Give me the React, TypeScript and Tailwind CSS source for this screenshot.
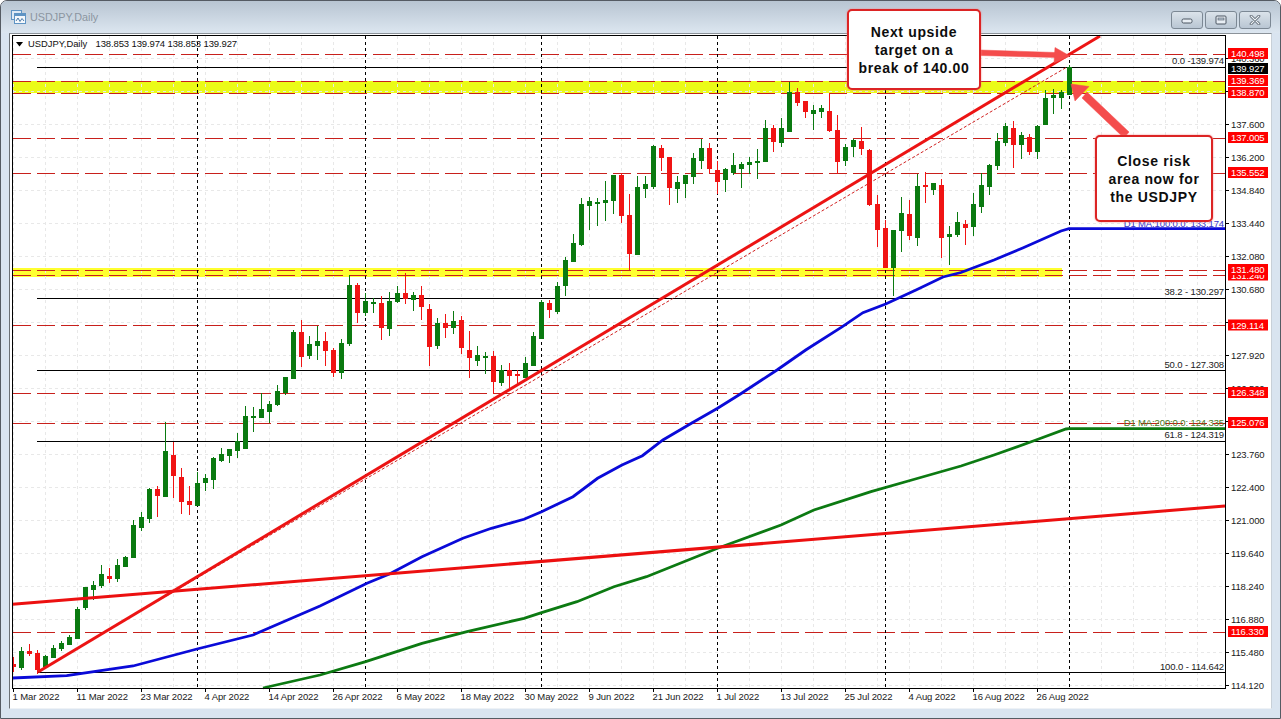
import React from "react";

type C = [string, number, number, number, number];
const candles: C[] = [
  ["r",664,667,657,672],["g",651,668,647,670],["r",651,654,644,656],["r",653,670,650,674],["g",656,667,655,668],
  ["g",648,658,645,658],["g",643,649,641,651],["g",637,645,635,645],["g",609,639,607,639],["g",587,608,587,610],
  ["g",585,590,581,600],["g",574,586,565,588],["r",576,579,568,583],["g",565,579,559,582],["g",557,567,556,567],
  ["g",525,558,520,558],["g",517,528,512,531],["g",489,519,488,523],["r",489,496,486,517],["g",451,497,422,497],
  ["r",455,476,442,498],["r",477,502,468,514],["r",501,505,486,515],["g",483,506,472,506],["g",478,483,474,491],
  ["g",458,480,457,489],["g",454,461,448,462],["g",449,456,449,463],["g",441,451,433,458],["g",416,449,406,449],
  ["g",416,417,407,432],["g",409,418,393,418],["g",404,412,401,423],["g",391,405,385,406],["g",377,393,377,395],
  ["g",332,379,330,379],["r",332,357,320,367],["g",344,356,336,359],["g",341,346,326,360],["r",341,351,332,366],
  ["r",350,373,348,377],["g",343,373,339,379],["g",285,344,275,346],["r",285,313,283,323],["g",301,313,293,316],
  ["g",302,303,298,313],["r",303,328,296,340],["g",301,329,292,336],["g",293,302,286,303],["r",293,299,273,304],
  ["g",295,300,292,311],["r",295,307,286,320],["r",309,347,304,366],["g",323,346,318,349],["r",323,328,314,338],
  ["g",321,328,311,334],["r",320,348,316,354],["r",350,358,331,378],["g",355,361,346,366],["g",356,357,352,374],
  ["r",356,382,351,394],["g",370,383,365,386],["r",370,376,363,390],["r",374,376,370,385],["g",363,378,357,378],
  ["g",336,366,332,366],["g",302,339,300,339],["r",303,310,300,318],["g",286,312,282,314],["g",260,286,257,296],
  ["g",243,262,234,262],["g",204,245,198,246],["g",201,206,197,230],["g",202,204,198,226],["g",200,203,181,221],
  ["g",175,201,175,214],["r",175,216,173,223],["r",215,254,194,270],["g",187,255,176,255],["g",184,189,176,198],
  ["g",146,187,145,189],["r",148,158,145,171],["r",157,188,157,205],["g",182,189,176,203],["g",175,184,175,198],
  ["g",158,177,153,184],["g",148,161,139,169],["r",148,169,143,173],["r",170,182,161,194],["g",169,180,168,192],
  ["g",165,173,153,175],["g",164,169,162,188],["g",162,165,157,174],["g",161,162,149,179],["g",128,162,120,162],
  ["r",128,142,125,152],["g",128,143,118,147],["g",92,132,82,132],["r",92,103,88,106],["r",101,112,101,118],
  ["g",110,114,105,130],["g",108,112,105,118],["r",111,131,93,132],["r",130,162,115,174],["g",147,161,144,166],
  ["g",140,147,139,157],["r",141,149,127,155],["r",150,205,149,206],["r",204,230,195,247],["r",228,268,220,268],
  ["g",230,268,230,296],["g",213,231,197,252],["r",214,236,200,240],["g",186,238,174,246],["r",185,186,172,203],
  ["g",183,190,183,195],["r",185,238,179,258],["g",234,237,226,265],["g",222,235,212,237],["r",224,228,220,245],
  ["g",204,227,193,236],["g",185,207,173,213],["g",165,187,164,195],["g",141,166,133,170],["g",126,143,123,146],
  ["r",128,145,121,168],["g",135,145,132,159],["r",137,152,134,155],["g",126,152,125,159],["g",98,125,90,125],
  ["g",95,98,89,114],["g",92,98,90,109],["g",67,95,65,95],
];

const blue = "12.5,678 66.7,675.7 133,666 197,649 253,635 320,606 367,583.3 389.4,574 422,556.7 462.9,538.3 491.4,528.3 524,519.3 541.6,511.7 573,496.7 597.6,478.3 622,465 642.4,455.7 662.9,440 691.4,423.3 717.6,408.3 740.4,394 777,370 805.7,350 842.4,326.7 862.9,312.7 885.7,304 916,290 943,277 961,272.5 994,260 1022.7,248 1061,231 1069,228.7 1225,228.7";
const green = "263,688 320,675 365.7,661.7 422,643.3 467,631.7 524,618.3 541.6,612.7 577,601.7 613.9,586.7 646.5,576.7 717.6,548.3 781,525 813.9,510 871,491.7 911.8,480 961,466 994,455 1036,440 1066,429 1069,428.7 1225,428.7";

const levels = [54.5, 81.5, 93.5, 138.5, 173.5, 270.5, 275.5, 325.5, 393.5, 423.5, 632.5];
const fibs: [number, string, number][] = [
  [67.5, "0.0 -139.974", 61],
  [298.5, "38.2 - 130.297", 292],
  [370.5, "50.0 - 127.308", 365],
  [441.5, "61.8 - 124.319", 435],
  [672.5, "100.0 - 114.642", 666.5],
];
const seps = [197.5, 365.5, 541.5, 717.5, 885.5, 1069.5];
const gridY = [685, 652, 619, 586, 553, 520, 487, 454, 421, 388, 355, 322, 289, 256, 223, 190, 157, 124, 91, 58];
const prices: [string, number][] = [
  ["114.120",685],["115.480",652],["116.880",619],["118.240",586],["119.640",553],["121.000",520],["122.400",487],["123.760",454],
  ["126.520",388],["127.920",355],["129.300",322],["130.680",289],["132.080",256],["133.440",223],["134.840",190],
  ["136.200",157],["137.600",124],["140.360",58],
];
const marks: [string, number, string][] = [
  ["140.498",53.5,"#f00"],["139.927",68.5,"#000"],["139.369",80.5,"#f00"],["138.870",92.5,"#f00"],["137.005",137.5,"#f00"],
  ["135.552",172.5,"#f00"],["131.240",275,"#f00"],["131.480",269.5,"#f00"],["129.114",325,"#f00"],["126.348",392.5,"#f00"],
  ["125.076",422.5,"#f00"],["116.330",631.5,"#f00"],
];
const dates = ["1 Mar 2022","11 Mar 2022","23 Mar 2022","4 Apr 2022","14 Apr 2022","26 Apr 2022","6 May 2022","18 May 2022","30 May 2022","9 Jun 2022","21 Jun 2022","1 Jul 2022","13 Jul 2022","25 Jul 2022","4 Aug 2022","16 Aug 2022","26 Aug 2022"];
const vGrid = Array.from({ length: 38 }, (_, i) => 13.5 + 32 * i);
const head: [string, number][] = [["138.853",95.5],["139.974",131.5],["138.853",167.5],["139.927",203.5]];

function Chart() {
  return (
    <svg width="1262" height="674" className="block font-['Liberation_Sans',Arial,sans-serif] text-[9.5px] tracking-[-0.12px]">
      <g transform="translate(-10,-34)">
        <rect x="12" y="81" width="1213" height="12" fill="#ebfb17" />
        <rect x="12" y="268" width="1050" height="9" fill="#ffff30" />
        {gridY.map((y) => (
          <line key={y} x1="13" x2="1225" y1={y + 0.5} y2={y + 0.5} stroke="#e8e8e8" strokeDasharray="3 3" />
        ))}
        {vGrid.map((x) => (
          <line key={x} x1={x} x2={x} y1="36" y2="688" stroke="#e8e8e8" strokeDasharray="3 3" />
        ))}
        {levels.map((y) => (
          <line key={y} x1="13" x2="1225" y1={y} y2={y} stroke="#c8201c" strokeDasharray="18 6" />
        ))}
        {fibs.map(([y, t, ty]) => (
          <g key={y}>
            <line x1="37" x2="1225" y1={y} y2={y} stroke="#000" />
            <text x="1224" y={ty + 3} textAnchor="end" fill="#222">{t}</text>
          </g>
        ))}
        {seps.map((x) => (
          <line key={x} x1={x} x2={x} y1="36" y2="688" stroke="#000" strokeDasharray="3 3" />
        ))}
        <text x="1224" y="227" textAnchor="end" fill="#3434c8">D1 MA:100:0.0: 133.174</text>
        <text x="1224" y="426" textAnchor="end" fill="#4a7a20">D1 MA:200:0.0: 124.335</text>
        {candles.map(([c, bt, bb, wt, wb], k) => {
          const f = c === "g" ? "#0a7a10" : "#f01414";
          const x = 13 + 8 * k;
          return (
            <g key={k}>
              <rect x={x} y={wt} width="1" height={wb - wt} fill={f} />
              <rect x={k === 0 ? 13 : x - 2} y={bt} width={k === 0 ? 3 : 5} height={Math.max(bb - bt, 2)} fill={f} />
            </g>
          );
        })}
        <polyline points={blue} fill="none" stroke="#0a0ad8" strokeWidth="2.8" />
        <polyline points={green} fill="none" stroke="#0c7a12" strokeWidth="2.8" />
        <line x1="12.5" y1="604.3" x2="1225" y2="506" stroke="#ec1010" strokeWidth="3" />
        <line x1="37" y1="672" x2="1067" y2="67" stroke="#d02020" strokeWidth="1" strokeDasharray="3 2" />
        <line x1="38" y1="672" x2="1100" y2="36" stroke="#ec1414" strokeWidth="3" />
        <line x1="12.5" y1="35" x2="12.5" y2="688" stroke="#000" />
        <line x1="1225.5" y1="35" x2="1225.5" y2="688" stroke="#000" />
        <line x1="12" y1="35.5" x2="1226" y2="35.5" stroke="#000" />
        <line x1="12" y1="688.5" x2="1226" y2="688.5" stroke="#000" />
        {gridY.map((y) => (
          <line key={y} x1="1226" x2="1229" y1={y + 0.5} y2={y + 0.5} stroke="#000" />
        ))}
        {prices.map(([p, y]) => (
          <text key={p} x="1231" y={y + 3.5} fill="#1a1a1a">{p}</text>
        ))}
        {marks.map(([p, y, bg]) => (
          <g key={p}>
            <rect x="1228" y={y - 5.5} width="40" height="11" fill={bg} />
            <text x="1231" y={y + 3.5} fill="#fff">{p}</text>
          </g>
        ))}
        {dates.map((d, i) => (
          <g key={d}>
            <line x1={13.5 + 64 * i} x2={13.5 + 64 * i} y1="689" y2="692" stroke="#000" />
            <text x={12.5 + 64 * i} y="700" fill="#1a1a1a">{d}</text>
          </g>
        ))}
        <path d="M16 42h7l-3.5 4.5z" fill="#000" />
        <text x="28" y="47" fill="#111" className="text-[9.4px] tracking-normal">USDJPY,Daily</text>
        {head.map(([t, x]) => (
          <text key={x} x={x} y="47" fill="#111">{t}</text>
        ))}
        <g fill="#f44c4c" stroke="#f44c4c" strokeLinejoin="round" strokeWidth="0.5">
          <path d="M980 50 L1056 52.5 L1056 57.5 L980 55.5 Z" />
          <path d="M1055 47.5 L1070 56 L1054 63 Z" />
          <path d="M1129 132 L1087 92 L1082 98 L1124 138 Z" />
          <path d="M1071 84 L1089 86.5 L1075 101 Z" />
        </g>
      </g>
    </svg>
  );
}

function Callout({ className, lines }: { className: string; lines: string[] }) {
  return (
    <div className={"absolute flex flex-col items-center justify-center rounded-[5px] border-2 border-[#dc2424] bg-white text-[14px] leading-[18px] font-bold tracking-[0.65px] text-[#0d0d0d] shadow-[0_0_2px_#f08080] font-['Liberation_Sans',Arial,sans-serif] " + className}>
      {lines.map((l) => (
        <span key={l}>{l}</span>
      ))}
    </div>
  );
}

function WinBtn({ children }: { children: React.ReactNode }) {
  return (
    <div className="flex h-[18px] w-[32px] items-center justify-center rounded-[3px] border border-[#7c8894] bg-gradient-to-b from-[#dbe3ea] to-[#b9c6d3]">
      {children}
    </div>
  );
}

export default function App() {
  return (
    <div className="relative flex h-[719px] w-[1281px] flex-col overflow-hidden rounded-t-[7px] border border-[#555b63] bg-[#d9e4f0]">
      <div className="flex h-[32px] shrink-0 items-center justify-between bg-gradient-to-b from-[#b8c5d2] to-[#dce6f0] pr-[9px] pl-[10px] font-['Liberation_Sans',Arial,sans-serif]">
        <div className="flex items-center gap-[4px]">
          <svg width="15" height="14" viewBox="0 0 15 14">
            <rect x="0.5" y="0.5" width="10" height="9" fill="#dfeaf5" stroke="#5f94c4" />
            <rect x="3.5" y="3.5" width="11" height="10" fill="#f4f8fc" stroke="#5f94c4" />
            <rect x="3.5" y="3.5" width="11" height="2.5" fill="#5f94c4" />
            <path d="M5 11 L7 8 L9 11.5 L11 8.5 L13 11" fill="none" stroke="#4a7aa8" strokeWidth="1" />
          </svg>
          <span className="text-[10.8px] text-[#8b95a0]">USDJPY,Daily</span>
        </div>
        <div className="flex items-center gap-[2px] pt-[5px]">
          <WinBtn>
            <svg width="12" height="7" viewBox="0 0 12 7" className="mt-[3px]">
              <rect x="1" y="1" width="10" height="4" rx="1.5" fill="#e8eef4" stroke="#4a5561" />
            </svg>
          </WinBtn>
          <WinBtn>
            <svg width="12" height="10" viewBox="0 0 12 10">
              <rect x="1" y="1" width="10" height="8" rx="1" fill="#e8eef4" stroke="#4a5561" />
              <rect x="3" y="3" width="6" height="2" fill="#b9c6d3" stroke="#4a5561" strokeWidth="0.6" />
            </svg>
          </WinBtn>
          <WinBtn>
            <svg width="12" height="10" viewBox="0 0 12 10">
              <path d="M2 1 L10 9 M10 1 L2 9" stroke="#4a5561" strokeWidth="2.6" strokeLinecap="round" />
              <path d="M2 1 L10 9 M10 1 L2 9" stroke="#eef2f6" strokeWidth="1.2" strokeLinecap="round" />
            </svg>
          </WinBtn>
        </div>
      </div>
      <div className="mx-[8px] mb-[9px] flex-1 overflow-hidden border-t border-r border-b border-l border-t-[#8b9299] border-r-[#c8d0d8] border-b-[#eef2f6] border-l-[#6b7075] bg-white">
        <Chart />
      </div>
      <Callout className="top-[8px] left-[846px] h-[81px] w-[134px]" lines={["Next upside", "target on a", "break of 140.00"]} />
      <Callout className="top-[134px] left-[1094px] h-[87px] w-[118px]" lines={["Close risk", "area now for", "the USDJPY"]} />
    </div>
  );
}
